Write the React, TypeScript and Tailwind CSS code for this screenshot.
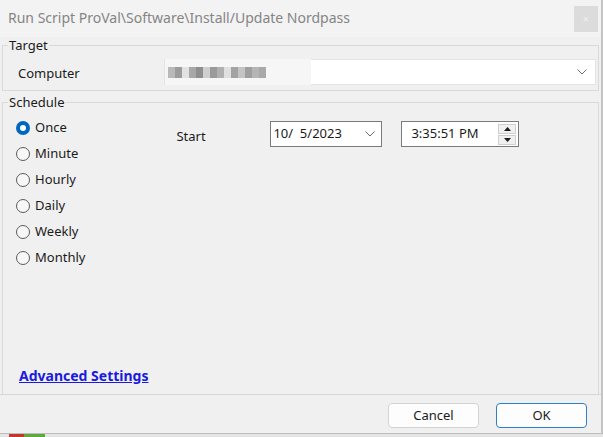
import React from "react";

const font = { fontFamily: '"Noto Sans", "Liberation Sans", sans-serif' };

function Radio({ label, checked }: { label: string; checked?: boolean }) {
  return (
    <div className="flex items-center h-[26px]">
      {checked ? (
        <span className="w-[14px] h-[14px] rounded-full bg-[#0067c0] flex items-center justify-center">
          <span className="w-[6px] h-[6px] rounded-full bg-white" />
        </span>
      ) : (
        <span className="w-[14px] h-[14px] rounded-full border border-[#5c5c5c] bg-[#f7f7f7]" />
      )}
      <span className="ml-[5px] text-[13px] text-[#1b1b1b]">{label}</span>
    </div>
  );
}

function Chevron() {
  return (
    <svg width="10" height="6" viewBox="0 0 10 6" fill="none">
      <path d="M0.5 0.5L5 5L9.5 0.5" stroke="#6a6a6a" strokeWidth="1" />
    </svg>
  );
}

// pixelated (redacted) host name
const mosaic = [
  "#b9b9b9", "#9c9c9c", "#e2e2e2", "#a8a8a8", "#8f8f8f", "#cfcfcf", "#9a9a9a",
  "#b0b0b0", "#e0e0e0", "#a3a3a3", "#c4c4c4", "#9f9f9f", "#b5b5b5", "#a9a9a9",
];

export default function App() {
  return (
    <div
      className="w-[603px] h-[437px] bg-[#f0f0f0] flex flex-col overflow-hidden"
      style={font}
    >
      <div className="flex-1 flex flex-col border-r-2 border-[#c4c4c4]">
        {/* Title bar */}
        <div className="h-[37px] flex items-start bg-[#f3f3f3]">
          <div className="pl-[8px] pt-[7px] text-[14px] text-[#858585]">
            Run Script ProVal\Software\Install/Update Nordpass
          </div>
          <div className="ml-auto mr-[3px] mt-[6px] w-[24px] h-[26px] bg-[#dcdcdc] flex items-center justify-center text-[11px] text-[#f0f0f0]">
            ×
          </div>
        </div>

        {/* Target */}
        <fieldset className="mx-[2px] border border-[#d9d9d9] h-[54px]">
          <legend className="ml-[5px] px-[1px] text-[13px] text-[#1b1b1b] leading-[16px]">
            Target
          </legend>
          <div className="flex items-center h-[26px] mt-[6px]">
            <span className="ml-[15px] mt-[4px] w-[146px] text-[13px] text-[#1b1b1b]">
              Computer
            </span>
            <div className="flex-1 mr-[2px] h-[26px] bg-white border border-[#e3e3e3] flex items-center">
              <div className="h-[26px] w-[146px] bg-[#f6f6f6] flex items-center pl-[3px]">
                {mosaic.map((c, i) => (
                  <span
                    key={i}
                    className="w-[7px] h-[11px]"
                    style={{ background: c }}
                  />
                ))}
              </div>
              <span className="ml-auto mr-[8px]">
                <Chevron />
              </span>
            </div>
          </div>
        </fieldset>

        {/* Schedule */}
        <fieldset className="mx-[2px] mt-[3px] border border-[#d9d9d9] border-b-0 h-[300px]">
          <legend className="ml-[5px] px-[1px] text-[13px] text-[#1b1b1b] leading-[16px]">
            Schedule
          </legend>
          <div className="flex pt-[5px]">
            <div className="ml-[13px] flex flex-col">
              <Radio label="Once" checked />
              <Radio label="Minute" />
              <Radio label="Hourly" />
              <Radio label="Daily" />
              <Radio label="Weekly" />
              <Radio label="Monthly" />
            </div>
            <div className="ml-[91px] flex items-start pt-[6px]">
              <span className="mt-[6px] w-[94px] text-[13px] text-[#1b1b1b]">
                Start
              </span>
              <div className="w-[112px] h-[26px] bg-white border border-[#7a7a7a] flex items-center pl-[2px] text-[13px] text-[#1b1b1b]">
                <span className="whitespace-pre">10/  5/2023</span>
                <span className="ml-auto mr-[6px]">
                  <Chevron />
                </span>
              </div>
              <div className="ml-[19px] w-[118px] h-[26px] bg-white border border-[#7a7a7a] flex items-center pl-[9px] text-[13px] text-[#1b1b1b]">
                <span>3:35:51 PM</span>
                <div className="ml-auto mr-[2px] w-[18px] h-[21px] flex flex-col gap-[1px]">
                  <div className="flex-1 bg-[#f0f0f0] border border-[#cfcfcf] flex items-center justify-center">
                    <svg width="7" height="4" viewBox="0 0 7 4">
                      <path d="M0 4L3.5 0L7 4Z" fill="#1b1b1b" />
                    </svg>
                  </div>
                  <div className="flex-1 bg-[#f0f0f0] border border-[#cfcfcf] flex items-center justify-center">
                    <svg width="7" height="4" viewBox="0 0 7 4">
                      <path d="M0 0L3.5 4L7 0Z" fill="#1b1b1b" />
                    </svg>
                  </div>
                </div>
              </div>
            </div>
          </div>
          <div className="mt-[95px] ml-[16px] text-[14px] leading-[19px] font-bold text-[#1a1ae0] underline">
            Advanced Settings
          </div>
        </fieldset>

        {/* Footer */}
        <div className="flex-1 border-t border-[#d6d6d6] flex items-start justify-end pt-[8px] pr-[14px] gap-[17px]">
          <button className="w-[91px] h-[25px] bg-[#fdfdfd] border border-[#d3d3d3] rounded-[4px] text-[13px] text-[#1b1b1b]">
            Cancel
          </button>
          <button className="w-[91px] h-[25px] bg-[#fdfdfd] border border-[#2d7fc6] rounded-[4px] text-[13px] text-[#1b1b1b]">
            OK
          </button>
        </div>
      </div>

      {/* desktop strip under the dialog */}
      <div className="h-[4px] flex bg-[#e4e4e4] border-t border-[#bdbdbd]">
        <span className="ml-[9px] w-[15px] bg-[#c0392b]" />
        <span className="w-[21px] bg-[#5fa83c]" />
      </div>
    </div>
  );
}
